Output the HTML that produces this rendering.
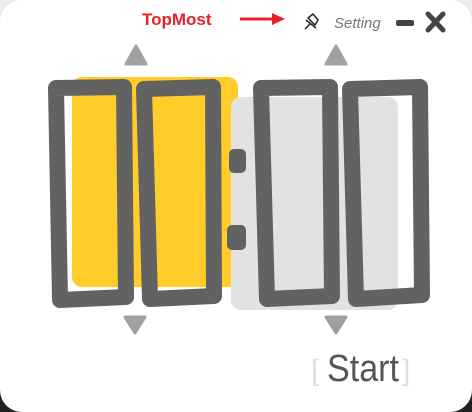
<!DOCTYPE html>
<html><head><style>
html,body{margin:0;padding:0;width:472px;height:412px;overflow:hidden;background:linear-gradient(#ececec 0,#ececec 50%,#222 50%,#222 100%);}
.win{position:absolute;left:0;top:0;width:472px;height:412px;background:#fff;border-radius:22px;}
</style></head><body>
<div class="win"></div>
<svg width="472" height="412" style="position:absolute;left:0;top:0">
<rect x="72" y="77" width="166" height="210" rx="10" fill="#ffcc2a"/>
<rect x="231" y="97" width="167" height="213" rx="10" fill="#e2e2e2"/>
<g fill="none" stroke="#626262" stroke-width="16" stroke-linejoin="round">
<path d="M56 88 L124 87 L126 297 L60 300 Z"/>
<path d="M144 89 L213 87 L214 296 L150 299 Z"/>
<path d="M261 88 L330 87 L332 296 L267 299 Z"/>
<path d="M350 89 L420 87 L422 295 L356 299 Z"/>
</g>
<rect x="229" y="149" width="17" height="24" rx="5" fill="#626262"/>
<rect x="227" y="225" width="19" height="25" rx="5" fill="#626262"/>
<g fill="#a0a0a0" stroke="#a0a0a0" stroke-width="3" stroke-linejoin="round">
<path d="M136 46 L146 64 L126 64 Z"/>
<path d="M336 46 L346 64 L326 64 Z"/>
<path d="M125 317 L145 317 L135 333 Z"/>
<path d="M326 317 L346 317 L336 333 Z"/>
</g>
<text x="142" y="25" font-family="Liberation Sans,sans-serif" font-weight="bold" font-size="17" fill="#e8202a">TopMost</text>
<path d="M240 19 L275 19" stroke="#e8202a" stroke-width="3"/>
<path d="M272 13 L285 19 L272 25 Z" fill="#e8202a"/>
<path d="M305 29 L310 24 M308 18 L313 14 L318 20 L315 25 Z M306 20 L316 28" stroke="#222" stroke-width="1.5" fill="none" stroke-linejoin="round"/>
<text x="334" y="28" font-family="Liberation Sans,sans-serif" font-size="15" fill="#777" font-style="italic">Setting</text>
<rect x="396" y="20" width="18" height="6" rx="2" fill="#444"/>
<path d="M428 14 L443 30 M443 14 L428 30" stroke="#444" stroke-width="5" stroke-linecap="round"/>
<text x="311" y="380" font-family="Liberation Sans,sans-serif" font-size="30" fill="#e0e0e0">[</text>
<text x="327" y="381" font-family="Liberation Sans,sans-serif" font-size="38" fill="#555" textLength="72" lengthAdjust="spacingAndGlyphs">Start</text>
<text x="402" y="380" font-family="Liberation Sans,sans-serif" font-size="30" fill="#e0e0e0">]</text>
</svg>
</body></html>
